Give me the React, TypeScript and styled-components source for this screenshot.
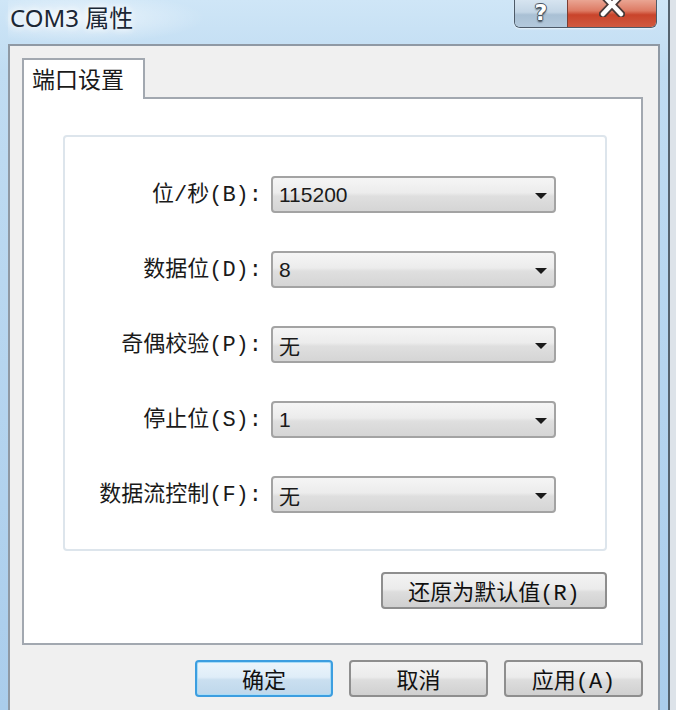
import React from "react";
import styled, { createGlobalStyle, css } from "styled-components";

const Global = createGlobalStyle`
  html, body { margin: 0; padding: 0; background: #b9d8f0; }
  #root { width: 676px; height: 710px; }
`;

const LABEL_FONT = `"Liberation Mono", "Noto Sans CJK SC", monospace`;

const Window = styled.div`
  width: 676px;
  height: 710px;
  box-sizing: border-box;
  display: flex;
  flex-direction: column;
  padding: 0 16px 0 8px;
  overflow: hidden;
  background: linear-gradient(180deg, #cfe6f7 0%, #c0dcf2 10%, #aacdec 100%);
  box-shadow: inset -6px 0 0 #dde3e9, inset -8px 0 0 #55636f;
`;

const TitleBar = styled.div`
  height: 44px;
  flex: none;
  display: flex;
  justify-content: space-between;
  align-items: flex-start;
  padding-left: 2px;
  background: radial-gradient(ellipse 170px 34px at 70px 18px, rgba(255,255,255,0.6), rgba(255,255,255,0) 75%);
`;

const Title = styled.div`
  font-family: "Noto Sans", "Noto Sans CJK SC", sans-serif;
  font-size: 24px;
  line-height: 36px;
  color: #1b2735;
  text-shadow: 0 0 6px rgba(255,255,255,0.95), 0 0 10px rgba(255,255,255,0.8);
  white-space: nowrap;
`;

const CaptionButtons = styled.div`
  display: flex;
  height: 27px;
  margin-right: 3px;
  border: 1px solid #4d5a68;
  border-top: none;
  border-radius: 0 0 6px 6px;
  overflow: hidden;
  box-shadow: 0 1px 2px rgba(255,255,255,0.6);
`;

const CapBtn = styled.div<{ $close?: boolean }>`
  position: relative;
  display: flex;
  justify-content: center;
  align-items: flex-start;
  overflow: hidden;
  ${(p) =>
    p.$close
      ? css`
          width: 88px;
          border-left: 1px solid #7a3e33;
          background: linear-gradient(180deg, #eaa593 0%, #dd7a63 40%, #c9442b 55%, #d15a3f 100%);
        `
      : css`
          width: 52px;
          background: linear-gradient(180deg, #d6e4f0 0%, #c3d5e5 45%, #a9c0d4 55%, #b3c9dc 100%);
        `}
`;

const HelpGlyph = styled.span`
  font-family: "DejaVu Sans", sans-serif;
  font-weight: bold;
  font-size: 22px;
  line-height: normal;
  color: #ffffff;
  text-shadow: -1px 0 #4a5663, 1px 0 #4a5663, 0 1px #4a5663, 0 -1px #4a5663, 0 2px 2px #34404c;
`;

const Body = styled.div`
  flex: 1;
  min-height: 0;
  display: flex;
  flex-direction: column;
  background: #f0f0f0;
  border: 2px solid #8f99a4;
  border-bottom: none;
  padding: 12px 15px 0 12px;
`;

const TabStrip = styled.div`
  display: flex;
  flex: none;
`;

const Tab = styled.div`
  position: relative;
  z-index: 1;
  width: 123px;
  height: 41px;
  box-sizing: border-box;
  margin-bottom: -2px;
  background: #ffffff;
  border: 2px solid #a2a8b0;
  border-bottom: none;
  padding: 0 0 3px 8px;
  display: flex;
  align-items: center;
  font-family: "Noto Sans CJK SC", sans-serif;
  font-size: 23px;
  color: #1a1a1a;
`;

const Panel = styled.div`
  flex: none;
  height: 548px;
  box-sizing: border-box;
  background: #ffffff;
  border: 2px solid #a2a8b0;
  padding: 36px 34px 0 39px;
  display: flex;
  flex-direction: column;
`;

const GroupBox = styled.div`
  height: 416px;
  box-sizing: border-box;
  border: 2px solid #dde5ec;
  border-radius: 4px;
  padding-top: 39px;
  display: flex;
  flex-direction: column;
  gap: 38px;
`;

const Row = styled.div`
  display: grid;
  grid-template-columns: 197px 285px;
  column-gap: 9px;
  align-items: center;
`;

const Label = styled.span`
  text-align: right;
  font-family: ${LABEL_FONT};
  font-size: 22px;
  line-height: 30px;
  margin-top: 2px;
  color: #1a1a1a;
  white-space: nowrap;
`;

const Combo = styled.div`
  height: 37px;
  box-sizing: border-box;
  border: 2px solid #a3a3a3;
  border-radius: 4px;
  background: linear-gradient(180deg, #f5f5f5 0%, #ececec 45%, #dfdfdf 55%, #d5d5d5 100%);
  display: flex;
  align-items: center;
  justify-content: space-between;
  padding: 0 7px 0 6px;
  font-family: "Liberation Sans", "Noto Sans CJK SC", sans-serif;
  font-size: 21px;
  color: #1a1a1a;
`;

const Arrow = styled.span`
  width: 0;
  height: 0;
  border-left: 6px solid transparent;
  border-right: 6px solid transparent;
  border-top: 6px solid #1a1a1a;
  margin-top: 2px;
`;

const Button = styled.button<{ $primary?: boolean; $width: number }>`
  width: ${(p) => p.$width}px;
  height: 37px;
  box-sizing: border-box;
  border: 2px solid #8e8e8e;
  border-radius: 4px;
  background: linear-gradient(180deg, #f3f3f3 0%, #ebebeb 46%, #dddddd 54%, #d0d0d0 100%);
  font-family: ${LABEL_FONT};
  font-size: 22px;
  color: #111111;
  padding: 0;
  display: flex;
  align-items: center;
  justify-content: center;
  ${(p) =>
    p.$primary &&
    css`
      border-color: #3c9ee0;
      background: linear-gradient(180deg, #ecf5fb 0%, #dfedf8 46%, #cadff0 54%, #bed7eb 100%);
      box-shadow: inset 0 0 0 1px #a9dcf7;
    `}
`;

const RestoreRow = styled.div`
  display: flex;
  justify-content: flex-end;
  margin-top: 21px;
`;

const Footer = styled.div`
  display: flex;
  justify-content: flex-end;
  gap: 16px;
  padding-top: 15px;
`;

const rows = [
  { label: "位/秒(B):", value: "115200" },
  { label: "数据位(D):", value: "8" },
  { label: "奇偶校验(P):", value: "无" },
  { label: "停止位(S):", value: "1" },
  { label: "数据流控制(F):", value: "无" },
];

export default function App() {
  return (
    <>
      <Global />
      <Window>
        <TitleBar>
          <Title>COM3 属性</Title>
          <CaptionButtons>
            <CapBtn>
              <HelpGlyph>?</HelpGlyph>
            </CapBtn>
            <CapBtn $close>
              <svg width="26" height="20" viewBox="0 0 26 20" style={{ marginTop: -3 }}>
                <path d="M4 -2 L22 17 M22 -2 L4 17" stroke="#4a3a38" strokeWidth="8" strokeLinecap="round" />
                <path d="M4 -2 L22 17 M22 -2 L4 17" stroke="#ffffff" strokeWidth="4.5" strokeLinecap="round" />
              </svg>
            </CapBtn>
          </CaptionButtons>
        </TitleBar>
        <Body>
          <TabStrip>
            <Tab>端口设置</Tab>
          </TabStrip>
          <Panel>
            <GroupBox>
              {rows.map((r) => (
                <Row key={r.label}>
                  <Label>{r.label}</Label>
                  <Combo>
                    <span>{r.value}</span>
                    <Arrow />
                  </Combo>
                </Row>
              ))}
            </GroupBox>
            <RestoreRow>
              <Button $width={226}>还原为默认值(R)</Button>
            </RestoreRow>
          </Panel>
          <Footer>
            <Button $primary $width={138}>确定</Button>
            <Button $width={139}>取消</Button>
            <Button $width={139}>应用(A)</Button>
          </Footer>
        </Body>
      </Window>
    </>
  );
}
